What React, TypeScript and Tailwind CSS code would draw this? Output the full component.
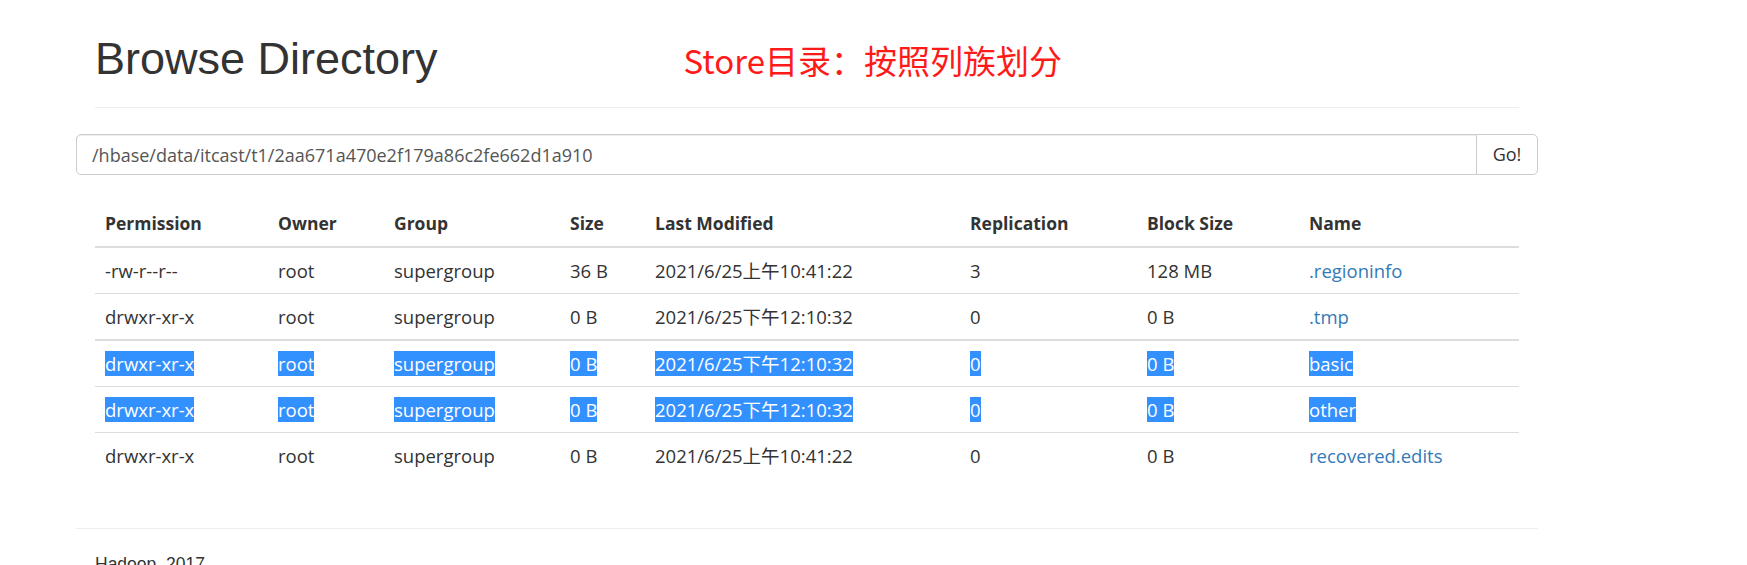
import React from "react";

const SANS = { fontFamily: '"Liberation Sans", Arial, sans-serif' };
const UI = { fontFamily: '"Open Sans", "Noto Sans CJK SC", sans-serif' };

type Row = {
  perm: string;
  owner: string;
  group: string;
  size: string;
  modified: string;
  repl: string;
  block: string;
  name: string;
  selected?: boolean;
  thick?: boolean;
};

const rows: Row[] = [
  { perm: "-rw-r--r--", owner: "root", group: "supergroup", size: "36 B", modified: "2021/6/25上午10:41:22", repl: "3", block: "128 MB", name: ".regioninfo" },
  { perm: "drwxr-xr-x", owner: "root", group: "supergroup", size: "0 B", modified: "2021/6/25下午12:10:32", repl: "0", block: "0 B", name: ".tmp" },
  { perm: "drwxr-xr-x", owner: "root", group: "supergroup", size: "0 B", modified: "2021/6/25下午12:10:32", repl: "0", block: "0 B", name: "basic", selected: true, thick: true },
  { perm: "drwxr-xr-x", owner: "root", group: "supergroup", size: "0 B", modified: "2021/6/25下午12:10:32", repl: "0", block: "0 B", name: "other", selected: true },
  { perm: "drwxr-xr-x", owner: "root", group: "supergroup", size: "0 B", modified: "2021/6/25上午10:41:22", repl: "0", block: "0 B", name: "recovered.edits" },
];

const headers = [
  { label: "Permission", w: "w-[173px]" },
  { label: "Owner", w: "w-[116px]" },
  { label: "Group", w: "w-[176px]" },
  { label: "Size", w: "w-[85px]" },
  { label: "Last Modified", w: "w-[315px]" },
  { label: "Replication", w: "w-[177px]" },
  { label: "Block Size", w: "w-[162px]" },
  { label: "Name", w: "" },
];

function Cell({ text, selected, link }: { text: string; selected?: boolean; link?: boolean }) {
  if (selected) {
    return <span className="inline-block bg-[#3390ff] text-white leading-[25px]">{text}</span>;
  }
  return <span className={link ? "text-[#337ab7]" : ""}>{text}</span>;
}

export default function App() {
  return (
    <div className="min-h-screen bg-white text-[#333]">
      <div className="ml-[95px] w-[1424px]">
        <div className="flex items-baseline pt-[34px] pb-[22px] border-b border-[#eee]">
          <h1 style={SANS} className="text-[45px] leading-[50px] font-normal">
            Browse Directory
          </h1>
          <span
            style={{ fontFamily: '"Noto Sans CJK SC", sans-serif' }}
            className="ml-[246px] text-[33px] leading-[50px] text-[#ff1a1a]"
          >
            Store目录：按照列族划分
          </span>
        </div>

        <div className="-mx-[19px] mt-[26px] flex h-[41px]">
          <input
            readOnly
            defaultValue="/hbase/data/itcast/t1/2aa671a470e2f179a86c2fe662d1a910"
            style={UI}
            className="flex-1 h-full rounded-l-[5px] border border-[#ccc] px-[15px] text-[18px] text-[#555] outline-none shadow-[inset_0_1px_1px_rgba(0,0,0,0.075)]"
          />
          <button
            type="button"
            style={UI}
            className="-ml-px w-[62px] h-full rounded-r-[5px] border border-[#ccc] bg-white text-[18px] text-[#333]"
          >
            Go!
          </button>
        </div>

        <table style={UI} className="mt-[26px] w-full table-fixed border-collapse text-[18.5px]">
          <thead>
            <tr className="border-b-2 border-[#ddd]">
              {headers.map(h => (
                <th key={h.label} className={`${h.w} px-[10px] py-[10px] text-left text-[17.5px] font-bold leading-[25px]`}>
                  {h.label}
                </th>
              ))}
            </tr>
          </thead>
          <tbody>
            {rows.map((r, i) => (
              <tr key={i} className={`${r.thick ? "border-t-2" : "border-t"} border-[#ddd]`}>
                {[r.perm, r.owner, r.group, r.size, r.modified, r.repl, r.block].map((v, j) => (
                  <td key={j} className="px-[10px] py-[10px] leading-[25px] whitespace-nowrap">
                    <Cell text={v} selected={r.selected} />
                  </td>
                ))}
                <td className="px-[10px] py-[10px] leading-[25px] whitespace-nowrap">
                  <Cell text={r.name} selected={r.selected} link />
                </td>
              </tr>
            ))}
          </tbody>
        </table>

        <div className="-mx-[19px] mt-[50px] border-t border-[#eee]" />
        <p style={SANS} className="mt-[23px] text-[17.5px] leading-[25px]">
          Hadoop, 2017.
        </p>
      </div>
    </div>
  );
}
